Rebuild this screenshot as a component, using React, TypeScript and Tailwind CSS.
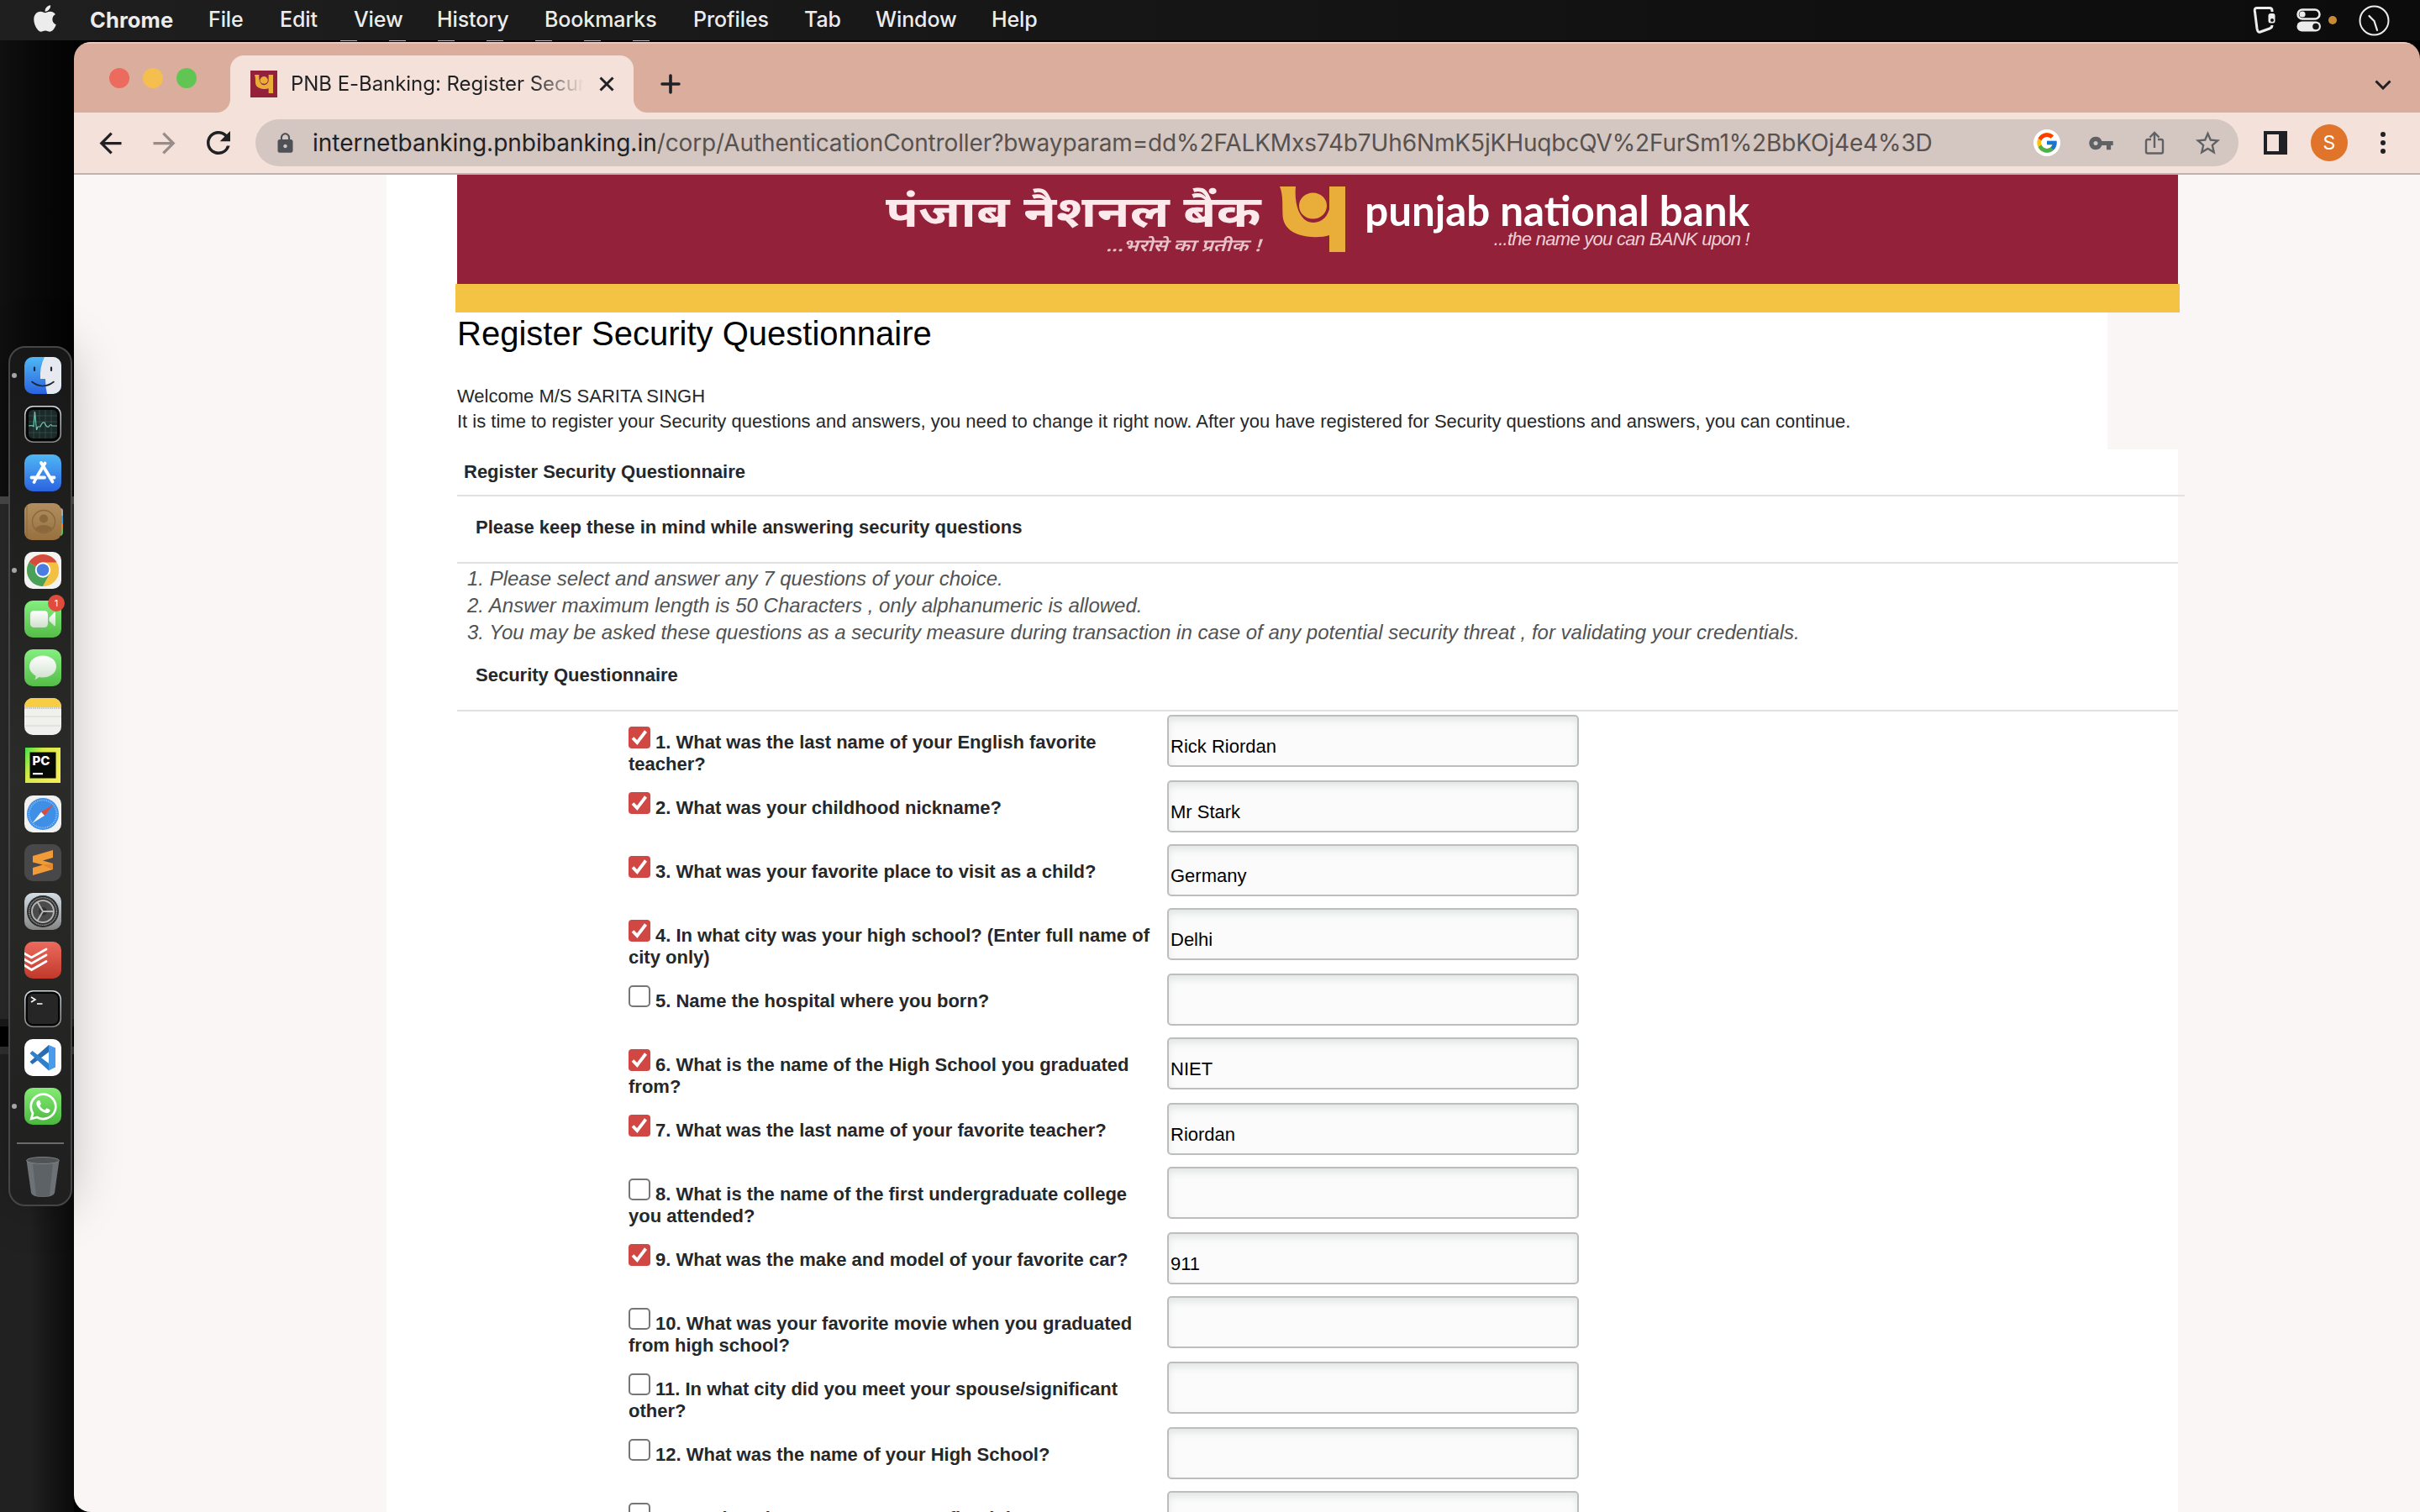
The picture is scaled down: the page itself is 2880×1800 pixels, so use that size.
import React from "react";
import { FaApple, FaWhatsapp } from "react-icons/fa";
import { FcGoogle } from "react-icons/fc";
import { MdArrowBack, MdArrowForward, MdRefresh, MdLock, MdVpnKey, MdStarBorder } from "react-icons/md";

const MENU = [
  { label: "File", cls: "w-[85px]" },
  { label: "Edit", cls: "w-[88px]" },
  { label: "View", cls: "w-[99px]" },
  { label: "History", cls: "w-[128px]" },
  { label: "Bookmarks", cls: "w-[177px]" },
  { label: "Profiles", cls: "w-[132px]" },
  { label: "Tab", cls: "w-[85px]" },
  { label: "Window", cls: "w-[138px]" },
  { label: "Help", cls: "w-[80px]" },
];

type Question = { text: string; checked: boolean; answer: string; h: string };

const TALL = "h-[78px]";
const SHORT = "h-[76px]";

const QUESTIONS: Question[] = [
  { text: "1. What was the last name of your English favorite teacher?", checked: true, answer: "Rick Riordan", h: TALL },
  { text: "2. What was your childhood nickname?", checked: true, answer: "Mr Stark", h: SHORT },
  { text: "3. What was your favorite place to visit as a child?", checked: true, answer: "Germany", h: SHORT },
  { text: "4. In what city was your high school? (Enter full name of city only)", checked: true, answer: "Delhi", h: TALL },
  { text: "5. Name the hospital where you born?", checked: false, answer: "", h: SHORT },
  { text: "6. What is the name of the High School you graduated from?", checked: true, answer: "NIET", h: TALL },
  { text: "7. What was the last name of your favorite teacher?", checked: true, answer: "Riordan", h: SHORT },
  { text: "8. What is the name of the first undergraduate college you attended?", checked: false, answer: "", h: TALL },
  { text: "9. What was the make and model of your favorite car?", checked: true, answer: "911", h: SHORT },
  { text: "10. What was your favorite movie when you graduated from high school?", checked: false, answer: "", h: TALL },
  { text: "11. In what city did you meet your spouse/significant other?", checked: false, answer: "", h: TALL },
  { text: "12. What was the name of your High School?", checked: false, answer: "", h: SHORT },
  { text: "13. In what city or town was your first job?", checked: false, answer: "", h: TALL },
];

function MenuBar() {
  return (
    <div className="flex h-12 w-full items-center bg-linear-to-r from-[#1f1f1f] via-[#151515] to-[#0c0c0c] font-['Inter'] text-[25px] text-[#ececec]">
      <div className="w-[107px] pb-[5px] pl-[40px]">
        <FaApple className="h-[36px] w-[27px]" />
      </div>
      <div className="w-[141px] text-[25.500px] font-bold tracking-[0.1px]">Chrome</div>
      {MENU.map((m) => (
        <div key={m.label} className={`shrink-0 font-medium tracking-[-0.1px] ${m.cls}`}>
          {m.label}
        </div>
      ))}
      <div className="ml-auto flex items-center pr-[36px]">
        <svg className="h-[34px] w-[28px]" viewBox="0 0 28 34" fill="none" stroke="#ececec" strokeWidth="3">
          <path d="M23 7 V5.500 Q23 2.500 20 2.500 H5 Q2 2.500 2.300 5.500 L5 27 Q6 32.500 9 31 L20 27 Q23 26 23 23" />
          <rect x="18.500" y="9" width="8" height="11.500" rx="2.500" fill="#ececec" stroke="none" />
          <circle cx="23" cy="17" r="2" fill="#111" stroke="none" />
        </svg>
        <svg className="ml-[24px] h-[28px] w-[30px]" viewBox="0 0 30 28" fill="none">
          <rect x="1.500" y="1.500" width="26" height="11" rx="5.500" stroke="#ececec" strokeWidth="2.500" />
          <circle cx="7" cy="7" r="3.600" fill="#ececec" />
          <rect x="0.500" y="15.500" width="28.500" height="12" rx="6" fill="#ececec" />
          <circle cx="23" cy="21.500" r="3.800" fill="#151515" />
        </svg>
        <div className="ml-[8px] size-[10px] rounded-full bg-[#c98a35]" />
        <svg className="ml-[26px] size-[37px]" viewBox="0 0 37 37" fill="none" stroke="#ececec" strokeLinecap="round">
          <circle cx="18.500" cy="18.500" r="17" strokeWidth="2" />
          <path d="M12.500 13 L18.500 19 L22 30" strokeWidth="2.200" />
        </svg>
      </div>
    </div>
  );
}

function PnbMark({ className }: { className: string }) {
  return (
    <svg className={className} viewBox="0 0 78 78" fill="#e9ae3a">
      <path d="M59 0 H78 V78 H59 V58 C53 60 46 60.500 38 60 C18 59 4 50 3.500 34 C3 20 4 10 0 0 H19 C18 10 19 20 22 28 C26 38 32 43 40 43 C48 43 56 38 59 27 Z" />
      <ellipse cx="39.500" cy="23" rx="16.500" ry="15.500" />
    </svg>
  );
}

function TabStrip() {
  return (
    <div className="flex h-[84px] border-t-2 border-[#e8c9bd] bg-[#dbad9c]">
      <div className="flex h-[82px] w-[160px] gap-[16px] pt-[29px] pl-[42px]">
        <span className="size-[24px] rounded-full bg-[#ed6a5e]" />
        <span className="size-[24px] rounded-full bg-[#f4bf4f]" />
        <span className="size-[24px] rounded-full bg-[#61c554]" />
      </div>
      <div className="mt-[14px] flex w-[532px] items-stretch">
        <div className="w-[26px] bg-[#f3e1da]">
          <div className="size-full rounded-br-[16px] bg-[#dbad9c]" />
        </div>
        <div className="flex w-[480px] items-center rounded-t-[16px] bg-[#f3e1da] pl-[24px]">
          <div className="flex size-[32px] items-center justify-center bg-[#93213a]">
            <PnbMark className="size-[22px]" />
          </div>
          <div className="ml-[16px] w-[349px] overflow-hidden bg-linear-to-r from-[#202124] from-82% to-[#20212400] bg-clip-text font-['Inter'] text-[24px] tracking-[-0.05px] whitespace-nowrap text-transparent">
            PNB E-Banking: Register Security
          </div>
          <svg className="ml-[18px] size-[18px]" viewBox="0 0 18 18" stroke="#202124" strokeWidth="3">
            <path d="M1.500 1.500 L16.500 16.500 M16.500 1.500 L1.500 16.500" />
          </svg>
        </div>
        <div className="w-[26px] bg-[#f3e1da]">
          <div className="size-full rounded-bl-[16px] bg-[#dbad9c]" />
        </div>
      </div>
      <svg className="mt-[36px] ml-[6px] size-[24px]" viewBox="0 0 24 24" stroke="#202124" strokeWidth="3.600" strokeLinecap="round">
        <path d="M12 2 V22 M2 12 H22" />
      </svg>
      <svg className="mt-[43px] mr-[34px] ml-auto h-[12px] w-[20px]" viewBox="0 0 20 12" fill="none" stroke="#202124" strokeWidth="3">
        <path d="M1.500 1.500 L10 10 L18.500 1.500" />
      </svg>
    </div>
  );
}

function Toolbar() {
  return (
    <div className="flex h-[74px] items-center border-b-2 border-[#bfb1ad] bg-[#f3e1da]">
      <div className="flex w-[216px] items-center pl-[24px] text-[#202124]">
        <MdArrowBack className="size-[39px]" />
        <MdArrowForward className="ml-[25px] size-[39px] text-[#978c89]" />
        <MdRefresh className="ml-[24px] size-[42px]" />
      </div>
      <div className="flex h-[56px] w-[2360px] items-center rounded-full bg-[#d4c6c1]">
        <MdLock className="ml-[22px] size-[27px] text-[#4e5156]" />
        <div className="ml-[19px] w-[2031px] font-['Inter'] text-[28px] tracking-[-0.13px] whitespace-nowrap text-[#57524f]">
          <span className="tracking-[0px] text-[#202124]">internetbanking.pnbibanking.in</span>
          /corp/AuthenticationController?bwayparam=dd%2FALKMxs74b7Uh6NmK5jKHuqbcQV%2FurSm1%2BbKOj4e4%3D
        </div>
        <div className="ml-[17px] flex size-[32px] items-center justify-center rounded-full bg-white">
          <FcGoogle className="size-[28px]" />
        </div>
        <MdVpnKey className="ml-[33px] size-[31px] text-[#5f6164]" />
        <svg className="ml-[36px] h-[28px] w-[24px]" viewBox="0 0 24 28" fill="none" stroke="#5f6164" strokeWidth="2.400">
          <path d="M8 10 H4 Q2 10 2 12 V24.500 Q2 26.500 4 26.500 H20 Q22 26.500 22 24.500 V12 Q22 10 20 10 H16 M12 20 V2 M6.500 7.500 L12 2 L17.500 7.500" />
        </svg>
        <MdStarBorder className="ml-[34px] size-[35px] text-[#5f6164]" />
      </div>
      <div className="ml-[30px] h-[28px] w-[28px] border-[4px] border-r-[10px] border-[#202124]" />
      <div className="ml-[28px] flex size-[44px] items-center justify-center rounded-full bg-[#df742a] font-['Inter'] text-[23px] text-white">S</div>
      <div className="ml-[39px] flex flex-col gap-[4px]">
        <span className="size-[6px] rounded-full bg-[#202124]" />
        <span className="size-[6px] rounded-full bg-[#202124]" />
        <span className="size-[6px] rounded-full bg-[#202124]" />
      </div>
    </div>
  );
}

function Banner() {
  return (
    <>
      <div className="ml-[456px] flex h-[130px] w-[2048px] bg-[#93213a] text-white">
        <div className="ml-[511px] flex w-[446px] flex-col items-end">
          <div className="mt-[22px] h-[54px] origin-right scale-x-[1.225] text-[52px] leading-[54px] font-bold whitespace-nowrap text-[#fbe9ec] font-['Noto_Sans_Devanagari','Noto_Sans',sans-serif]">
            पंजाब नैशनल बैंक
          </div>
          <div className="h-[22px] origin-right scale-x-[1.225] text-[20px] leading-[20px] font-semibold whitespace-nowrap text-[#e7c3ca] italic font-['Noto_Sans_Devanagari','Noto_Sans',sans-serif]">
            ...भरोसे का प्रतीक !
          </div>
        </div>
        <PnbMark className="mt-[14px] ml-[22px] size-[78px]" />
        <div className="ml-[24px] flex w-[457px] flex-col items-end">
          <div className="mt-[16px] h-[54px] font-['Lato'] text-[49.300px] leading-[52px] font-bold whitespace-nowrap">punjab national bank</div>
          <div className="h-[20px] font-['Liberation_Sans'] text-[22px] leading-[14px] tracking-[-0.72px] whitespace-nowrap text-[#ecd0d6] italic">
            ...the name you can BANK upon !
          </div>
        </div>
      </div>
      <div className="ml-[454px] h-[34px] w-[2052px] bg-[#f4c344]" />
    </>
  );
}

function Checkbox({ checked }: { checked: boolean }) {
  return checked ? (
    <svg className="mr-[6px] inline-block size-[26px] rounded-[4px] bg-[#d04744] align-baseline" viewBox="0 0 26 26" fill="none" stroke="#fff" strokeWidth="3.800">
      <path d="M5 13.500 L10.300 19 L20.500 5.500" />
    </svg>
  ) : (
    <span className="mr-[6px] inline-block size-[26px] rounded-[5px] border-2 border-[#767676] bg-white align-baseline" />
  );
}

function QuestionRow({ q }: { q: Question }) {
  return (
    <div className={`flex shrink-0 pl-[204px] ${q.h}`}>
      <div className="w-[641px] pt-[14px] pr-[12px] font-bold">
        <div className="text-[22px] leading-[26px]">
          <span className="inline-block h-[26px] align-baseline">
            <Checkbox checked={q.checked} />
          </span>
          {q.text}
        </div>
      </div>
      <div className="h-[62px] w-[490px] rounded-[5px] border-2 border-[#bcbebe] bg-[#fbfbfb] pt-[23px] pl-[2px] text-[22px] leading-[26px] text-black shadow-[inset_0_5px_8px_#e3e6e6]">
        {q.answer}
      </div>
    </div>
  );
}

function BankPage() {
  return (
    <div className="flex min-h-0 flex-1 flex-col overflow-hidden bg-[#faf6f5] font-['Liberation_Sans'] text-[22px] text-[#25282b]">
      <div className="ml-[372px] w-[2132px] shrink-0 bg-white">
        <div className="-ml-[372px]">
          <Banner />
        </div>
      </div>
      <div className="ml-[372px] h-[163px] w-[2048px] shrink-0 bg-white pl-[84px]">
        <h1 className="h-[85px] pt-[2px] text-[40px] leading-[46px] text-black">Register Security Questionnaire</h1>
        <p className="leading-[30px]">Welcome M/S SARITA SINGH</p>
        <p className="leading-[30px]">
          It is time to register your Security questions and answers, you need to change it right now. After you have registered for Security questions and
          answers, you can continue.
        </p>
      </div>
      <div className="ml-[372px] flex w-[2132px] flex-1 flex-col bg-white pl-[84px]">
        <div className="h-[56px] w-[2056px] shrink-0 border-b-2 border-[#dfe1e2] pt-[14px] pl-[8px] leading-[26px] font-bold">Register Security Questionnaire</div>
        <div className="h-[80px] shrink-0 border-b-2 border-[#dfe1e2] pt-[24px] pl-[22px] leading-[26px] font-bold">
          Please keep these in mind while answering security questions
        </div>
        <ol className="h-[98px] shrink-0 pt-[2px] pl-[12px] text-[24px] leading-[32px] text-[#505355] italic">
          <li>1. Please select and answer any 7 questions of your choice.</li>
          <li>2. Answer maximum length is 50 Characters , only alphanumeric is allowed.</li>
          <li>3. You may be asked these questions as a security measure during transaction in case of any potential security threat , for validating your credentials.</li>
        </ol>
        <div className="h-[78px] shrink-0 border-b-2 border-[#dfe1e2] pt-[22px] pl-[22px] leading-[26px] font-bold">Security Questionnaire</div>
        <div className="flex h-0 flex-1 flex-col pt-[4px]">
          {QUESTIONS.map((q) => (
            <QuestionRow key={q.text} q={q} />
          ))}
        </div>
      </div>
    </div>
  );
}

const S = "size-[44px]";

function DockIcons() {
  return (
    <>
      <svg className={S} viewBox="0 0 44 44">
        <defs>
          <linearGradient id="blue" x1="0" y1="0" x2="0" y2="1"><stop offset="0" stopColor="#4fb8f5" /><stop offset="1" stopColor="#2a62e0" /></linearGradient>
          <linearGradient id="green" x1="0" y1="0" x2="0" y2="1"><stop offset="0" stopColor="#84ee80" /><stop offset="1" stopColor="#55bd47" /></linearGradient>
          <linearGradient id="brown" x1="0" y1="0" x2="0" y2="1"><stop offset="0" stopColor="#b08f5f" /><stop offset="1" stopColor="#98703f" /></linearGradient>
          <linearGradient id="red" x1="0" y1="0" x2="0" y2="1"><stop offset="0" stopColor="#ec6b5e" /><stop offset="1" stopColor="#c0392b" /></linearGradient>
          <linearGradient id="silver" x1="0" y1="0" x2="0" y2="1"><stop offset="0" stopColor="#d3dde4" /><stop offset="1" stopColor="#858585" /></linearGradient>
          <linearGradient id="paper" x1="0" y1="0" x2="0" y2="1"><stop offset="0" stopColor="#ffffff" /><stop offset="1" stopColor="#cfe0cc" /></linearGradient>
          <linearGradient id="pc" x1="0" y1="0" x2="1" y2="0.600"><stop offset="0" stopColor="#45e04b" /><stop offset="0.400" stopColor="#d6e84a" /><stop offset="1" stopColor="#f3ee55" /></linearGradient>
          <clipPath id="tile"><rect width="44" height="44" rx="10" /></clipPath>
        </defs>
        <g clipPath="url(#tile)">
          <rect width="44" height="44" fill="url(#blue)" />
          <path d="M24 0 Q18 12 19 26 H25 Q25 36 27 44 H44 V0 Z" fill="#e6e9f0" />
        </g>
        <path d="M12 12.500 V16 M32 12.500 V16" stroke="#1d2733" strokeWidth="2.200" strokeLinecap="round" />
        <path d="M9 29.500 Q22 39.500 35 29.500" fill="none" stroke="#1d2733" strokeWidth="1.600" strokeLinecap="round" />
      </svg>
      <svg className={S} viewBox="0 0 44 44">
        <rect width="44" height="44" rx="10" fill="url(#silver)" />
        <rect x="1.500" y="1.500" width="41" height="41" rx="9" fill="#050505" />
        <rect x="5" y="5" width="34" height="34" rx="5" fill="#1d2a2a" />
        <path d="M5 12 H39 M5 19 H39 M5 32 H39 M11 5 V39 M18 5 V39 M25 5 V39 M32 5 V39" stroke="#35504d" strokeWidth="0.800" />
        <path d="M5 24 Q9 23 11 24.500 L12.500 7 L14.500 29 L16 25 H19 Q21 19 24 20 Q26 26 29 25 Q31 21 33 24 L39 24" fill="none" stroke="#6fc7b0" strokeWidth="1.200" />
      </svg>
      <svg className={S} viewBox="0 0 44 44">
        <rect width="44" height="44" rx="10" fill="url(#blue)" />
        <path d="M24.500 10.500 L13 30 M20 10 L33.500 32.500 M8.500 27.500 H24 M31 27.500 H35.500 M11.500 33 L12 32.200" stroke="#fff" strokeWidth="3.800" strokeLinecap="round" />
      </svg>
      <svg className="h-[44px] w-[47px]" viewBox="0 0 47 44">
        <path d="M40 6 H43 Q46 6 46 9 V15 H40 Z" fill="#a9a9a9" />
        <path d="M40 15 H46 V24 H40 Z" fill="#3aa0dc" />
        <path d="M40 24 H46 V31 H40 Z" fill="#e8842c" />
        <path d="M40 31 H46 V35 Q46 38 43 39 H40 Z" fill="#52c552" />
        <rect width="44" height="44" rx="9" fill="url(#brown)" />
        <path d="M3 3 V41" stroke="#8a683c" strokeWidth="1" />
        <circle cx="23" cy="22" r="13.500" fill="none" stroke="#8a673c" strokeWidth="1.300" />
        <circle cx="23" cy="18.500" r="5" fill="#8a673c" />
        <path d="M13 30 Q23 22 33 30 Q23 39 13 30" fill="#8a673c" />
      </svg>
      <svg className={S} viewBox="0 0 44 44">
        <rect width="44" height="44" rx="10" fill="#f3f3f3" />
        <circle cx="22" cy="22" r="19" fill="#f4c042" />
        <path d="M22 22 L5.550 12.500 A19 19 0 0 1 38.450 12.500 Z" fill="#d54b3d" />
        <path d="M22 22 L5.550 12.500 A19 19 0 0 0 22 41 L30 26 Z" fill="#48a05a" />
        <path d="M22 12.500 H38.450 A19 19 0 0 1 22 41 L30.200 26.700 Z" fill="#f4c042" />
        <circle cx="22" cy="21.500" r="9.200" fill="#fff" />
        <circle cx="22" cy="21.500" r="7.300" fill="#4a7de2" />
      </svg>
      <div className="relative">
        <svg className={S} viewBox="0 0 44 44">
          <rect width="44" height="44" rx="10" fill="url(#green)" />
          <rect x="7" y="12" width="21" height="20" rx="4.500" fill="url(#paper)" />
          <path d="M29.500 20.500 L35.500 14 Q37 13 37 15 V29 Q37 31 35.500 30 L29.500 24 Z" fill="url(#paper)" />
        </svg>
        <span className="absolute -top-[7px] left-[28px] flex size-[20px] items-center justify-center rounded-full bg-[#df4b3c] font-['Inter'] text-[11px] text-white">1</span>
      </div>
      <svg className={S} viewBox="0 0 44 44">
        <rect width="44" height="44" rx="10" fill="url(#green)" />
        <path d="M22 7.500 C31 7.500 38 13 38 20.500 C38 28 31 33.500 22 33.500 Q19.500 33.500 17.500 33 Q15 35.500 12 36 Q14 33.500 13.500 31.500 C9 29 6 25 6 20.500 C6 13 13 7.500 22 7.500 Z" fill="url(#paper)" />
      </svg>
      <svg className={S} viewBox="0 0 44 44">
        <g clipPath="url(#tile)">
          <rect width="44" height="44" fill="#f0f0ed" />
          <rect width="44" height="11" fill="#f6cd45" />
          <path d="M0 12 H44" stroke="#b9b6ae" strokeWidth="1.500" strokeDasharray="1.500 1" />
          <path d="M0 22 H44 M0 33 H44" stroke="#d4d4d0" strokeWidth="1.200" />
        </g>
      </svg>
      <svg className={S} viewBox="0 0 44 44">
        <rect x="1" y="1" width="42" height="42" fill="url(#pc)" />
        <rect x="6.500" y="6.500" width="31" height="31" fill="#060a06" />
        <text x="9.500" y="21.500" fontFamily="Inter" fontWeight="800" fontSize="15" fill="#fff">PC</text>
        <rect x="10" y="31" width="12" height="2.200" fill="#fff" />
      </svg>
      <svg className={S} viewBox="0 0 44 44">
        <rect width="44" height="44" rx="10" fill="#f1f1f1" />
        <circle cx="22" cy="22" r="19" fill="#3f8fe6" />
        <circle cx="22" cy="22" r="16.500" fill="none" stroke="#a7d0f6" strokeWidth="2" strokeDasharray="0.700 1.500" />
        <path d="M34.500 11 L20 19.500 L24 24 Z" fill="#e2493b" />
        <path d="M9.500 33 L20 19.500 L24 24 Z" fill="#f4f4f4" />
      </svg>
      <svg className={S} viewBox="0 0 44 44">
        <rect width="44" height="44" rx="10" fill="#48484a" />
        <path d="M10 14 L34 7 V16 L22 19.500 L34 23 V30 L10 37 V28 L22 24.500 L10 21.500 Z" fill="#f19b38" />
        <path d="M22 24.500 L34 23 V30 L28 28 Z" fill="#e08a2c" />
      </svg>
      <svg className={S} viewBox="0 0 44 44">
        <rect width="44" height="44" rx="10" fill="url(#silver)" />
        <circle cx="22" cy="22" r="19" fill="#2b2b2b" />
        <circle cx="22" cy="22" r="16.300" fill="none" stroke="#8f8f8f" strokeWidth="1.600" strokeDasharray="1.200 0.600" />
        <circle cx="22" cy="22" r="13" fill="#4b4b4b" stroke="#b0b0b0" strokeWidth="2" />
        <circle cx="22" cy="22" r="5" fill="#333" />
        <path d="M22 22 H35 M22 22 L15.500 10.700 M22 22 L15.500 33.300" stroke="#b5b5b5" strokeWidth="2" />
      </svg>
      <svg className={S} viewBox="0 0 44 44">
        <g clipPath="url(#tile)">
          <rect width="44" height="44" fill="url(#red)" />
          <path d="M-1 13.500 L8.500 19 L26 9 M-1 20.500 L8.500 26 L26 16 M-1 27.500 L8.500 33.500 L26 23.500" fill="none" stroke="#fff" strokeWidth="2.800" strokeLinecap="round" />
        </g>
      </svg>
      <svg className={S} viewBox="0 0 44 44">
        <rect width="44" height="44" rx="10" fill="url(#silver)" />
        <rect x="1.500" y="1.500" width="41" height="41" rx="9" fill="#050505" />
        <rect x="4" y="4" width="36" height="36" rx="6" fill="#262626" />
        <path d="M8 8 L13 11 L8 14 M15 16 H21.500" fill="none" stroke="#fff" strokeWidth="1.600" />
      </svg>
      <svg className={S} viewBox="0 0 44 44">
        <rect width="44" height="44" rx="10" fill="#fff" />
        <path d="M29 7 L6.500 27 L9.500 30 L31 14 Z" fill="#2a6cb4" />
        <path d="M29 37.500 L6.500 17 L9.500 14 L31 30.500 Z" fill="#2f7fcb" />
        <path d="M29 7 L37 10.500 V33.500 L29 37.500 Z" fill="#4a9be9" />
      </svg>
      <div className="flex size-[44px] items-center justify-center rounded-[10px] bg-linear-to-b from-[#84ea74] to-[#48b83c]">
        <FaWhatsapp className="size-[37px] text-white" />
      </div>
    </>
  );
}

function Dock() {
  return (
    <div className="absolute top-[412px] left-[10px] h-[1024px] w-[76px] rounded-[20px] border-2 border-[#464646] bg-linear-to-b from-[#171717] via-[#2b2b29] to-[#1f1f1f] shadow-[0_0_60px_rgba(0,0,0,0.22)]">
      <div className="flex flex-col gap-[14px] pt-[11px] pl-[17px]">
        <DockIcons />
      </div>
      <div className="mt-[21px] ml-[8px] h-[2px] w-[56px] bg-[#6a6a6a]" />
      <svg className="mt-[15px] ml-[19px] h-[49px] w-[40px]" viewBox="0 0 40 49">
        <path d="M0.500 4 L6 43 Q7 48 20 48 Q33 48 34 43 L39.500 4 Z" fill="#6d7276" />
        <path d="M8 8 L12 46 Q20 49 28 46 L32 8 Z" fill="#5d6266" />
        <ellipse cx="20" cy="4.500" rx="19.500" ry="4" fill="#505457" stroke="#7d8286" strokeWidth="1" />
      </svg>
      <span className="absolute top-[30px] left-[2px] size-[6px] rounded-full bg-[#a5a5a5]" />
      <span className="absolute top-[262px] left-[2px] size-[6px] rounded-full bg-[#a5a5a5]" />
      <span className="absolute top-[900px] left-[2px] size-[6px] rounded-full bg-[#a5a5a5]" />
    </div>
  );
}

function DesktopEdge() {
  return (
    <div className="flex w-[88px] shrink-0 flex-col">
      <div className="h-[543px] bg-linear-to-r from-[#101010] to-[#030303]" />
      <div className="h-[9px] bg-[#4a4a4a]" />
      <div className="h-[613px] bg-[#2a2a2a]" />
      <div className="h-[9px] bg-[#1a1a1a]" />
      <div className="h-[24px] bg-black" />
      <div className="h-[9px] bg-[#303030]" />
      <div className="flex-1 bg-linear-to-r from-[#212121] from-40% to-[#0a0a0a]" />
    </div>
  );
}

function BackgroundWindowSliver() {
  return (
    <div className="flex h-[2px] gap-[38px] pl-[317px]">
      {[0, 1, 2, 3, 4, 5, 6].map((i) => (
        <span key={i} className="h-px w-[20px] bg-[#b9b0bd]" />
      ))}
    </div>
  );
}

export default function App() {
  return (
    <div className="relative flex h-[1800px] w-[2880px] flex-col overflow-hidden bg-black">
      <MenuBar />
      <div className="flex min-h-0 flex-1">
        <DesktopEdge />
        <div className="flex w-[2792px] flex-col">
          <BackgroundWindowSliver />
          <div className="flex min-h-0 flex-1 flex-col overflow-hidden rounded-[20px] rounded-br-none">
            <TabStrip />
            <Toolbar />
            <BankPage />
          </div>
        </div>
      </div>
      <Dock />
    </div>
  );
}
